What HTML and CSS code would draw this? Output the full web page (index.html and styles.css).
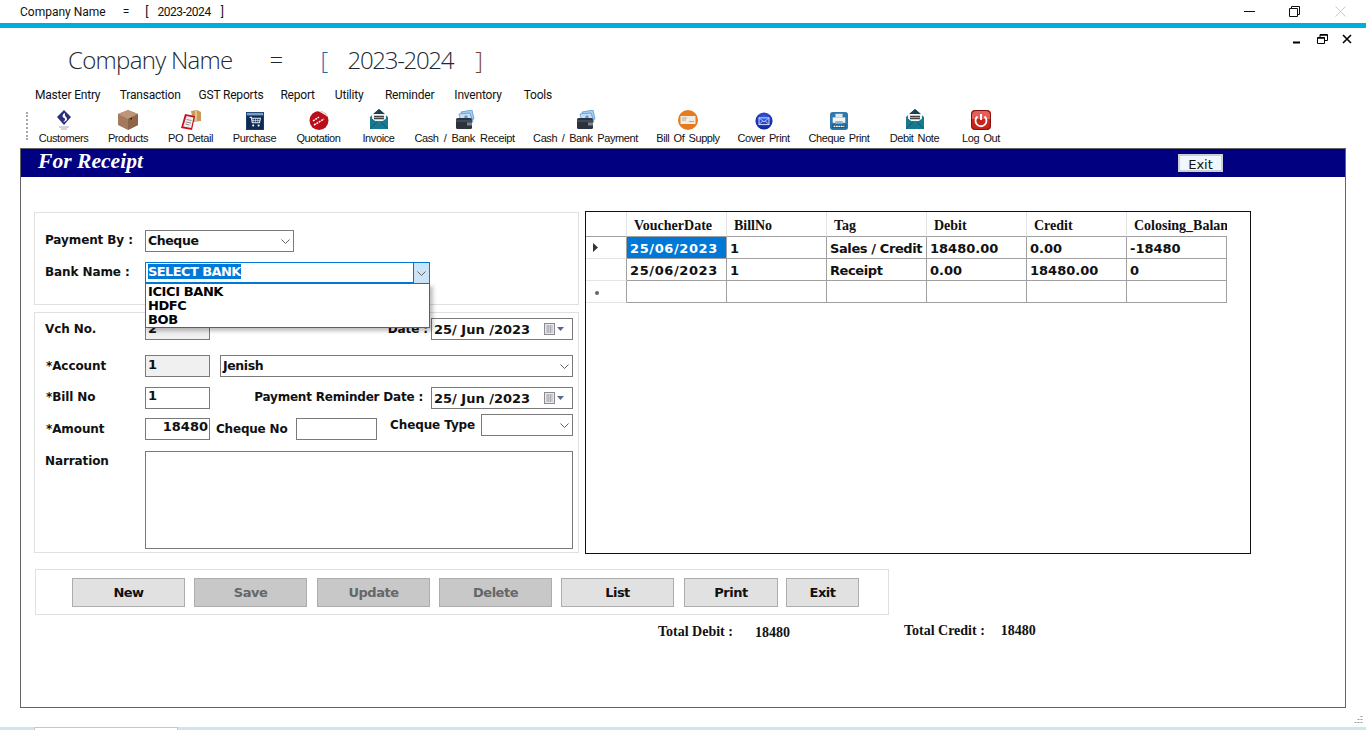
FILE: index.html
```html
<!DOCTYPE html>
<html lang="en">
<head>
<meta charset="utf-8">
<title>For Receipt</title>
<link rel="stylesheet" href="styles.css">
</head>
<body>
<svg class="defs" width="0" height="0" aria-hidden="true">
  <symbol id="chev" viewBox="0 0 9 5"><path d="M.5.5 4.500 4.500 8.500.5" fill="none" stroke="#606060"/></symbol>
  <symbol id="cal" viewBox="0 0 24 12">
    <rect x=".5" y=".5" width="10" height="11" fill="#e8e8ee" stroke="#8a8a90"/>
    <path d="M2 3h7M2 5h7M2 7h7M2 9h7M4 2v8M6.500 2v8" stroke="#9a9aa0" stroke-width=".7"/>
    <path d="M13 4h7l-3.500 4z" fill="#55688a"/>
  </symbol>
  <symbol id="mail" viewBox="0 0 20 22">
    <path d="M1 9 10 1l9 8v12H1z" fill="#1c7f96"/>
    <path d="M3 7 10 1l7 6-3 1H6z" fill="#1e3f50"/>
    <rect x="3" y="6" width="14" height="7" fill="#f4f6f6"/>
    <path d="M5 8.500h10M5 10.500h10" stroke="#444" stroke-width="1.300"/>
    <path d="M1 9l9 7 9-7v12H1z" fill="#17798f"/>
    <path d="M1 21l7-7M19 21l-7-7" stroke="#0d5568" stroke-width=".8"/>
  </symbol>
  <symbol id="wallet" viewBox="0 0 20 20">
    <path d="M6 2 17 0l2 9-11 3z" fill="#a9cdf0" stroke="#4b8ccc" stroke-width=".7"/>
    <path d="M4 4 15 3l3 9H6z" fill="#c6e0f8" stroke="#4b8ccc" stroke-width=".7"/>
    <circle cx="11" cy="7" r="1.800" fill="#5f9bd8"/>
    <rect x="1" y="8" width="16" height="11" rx="1.500" fill="#2c333c"/>
    <path d="M1 11h16" stroke="#59626e"/>
    <rect x="12" y="12.500" width="5" height="3" fill="#7b8590"/>
  </symbol>
</svg>

<header class="titlebar">
  <span class="titlebar-name">Company Name</span>
  <span class="titlebar-eq">=</span>
  <span class="titlebar-br">[</span>
  <span class="titlebar-yr">2023-2024</span>
  <span class="titlebar-br2">]</span>
  <div class="winctl">
    <svg class="wc" viewBox="0 0 11 11"><path d="M0 5.500h11" stroke="#111"/></svg>
    <svg class="wc wc-res" viewBox="0 0 11 11"><path d="M.5 2.500h8v8h-8zM2.500 2.500v-2h8v8h-2" fill="none" stroke="#111"/></svg>
    <svg class="wc wc-close" viewBox="0 0 11 11"><path d="M.5.5l10 10M10.500.5l-10 10" stroke="#c8c8c8"/></svg>
  </div>
</header>
<div class="accent"></div>

<div class="mdictl">
  <svg class="mdi mdi-min" viewBox="0 0 9 10"><path d="M1 8.500h7" stroke="#000" stroke-width="2"/></svg>
  <svg class="mdi mdi-res" viewBox="0 0 11 10"><path d="M.5 3.500h7v6h-7zM3 3V.5h7.500v6H8" fill="none" stroke="#000"/><path d="M.5 4h7M3 1h7" stroke="#000" stroke-width="1.500"/></svg>
  <svg class="mdi mdi-close" viewBox="0 0 10 10"><path d="M1 1l8 8M9 1l-8 8" stroke="#000" stroke-width="1.600"/></svg>
</div>

<div class="company">
  <span class="co-name">Company Name</span>
  <span class="co-eq">=</span>
  <span class="co-open">[</span>
  <span class="co-year">2023-2024</span>
  <span class="co-close">]</span>
</div>

<nav class="menu">
  <span class="m1">Master Entry</span>
  <span class="m2">Transaction</span>
  <span class="m3">GST Reports</span>
  <span class="m4">Report</span>
  <span class="m5">Utility</span>
  <span class="m6">Reminder</span>
  <span class="m7">Inventory</span>
  <span class="m8">Tools</span>
</nav>

<div class="toolbar">
  <div class="grip"></div>
  <div class="tool t-cust">
    <svg class="ico" viewBox="0 0 20 20"><path d="M10 0 17 7l-7 8-7-8z" fill="#2c2f78"/><path d="M11 3c-3 1-3 4-1 5 2 .5 1 3-1 4 4-.5 5-3 3-5-1.500-1-1-3-1-4z" fill="#fff"/><path d="M5 17h10M7 19h6" stroke="#a8a8b4"/></svg>
    <span>Customers</span>
  </div>
  <div class="tool t-prod">
    <svg class="ico" viewBox="0 0 20 20"><path d="M10 0 20 4v11l-10 5L0 15V4z" fill="#a47a5e"/><path d="M0 4l10 5 10-5-10-4z" fill="#bd9679"/><path d="M10 9v11l10-5V4z" fill="#8f654a"/><path d="M11 9l3-1.500v2z" fill="#222"/></svg>
    <span>Products</span>
  </div>
  <div class="tool t-po">
    <svg class="ico" viewBox="0 0 20 20"><path d="M10 1l6-1 4 2v9l-8 1z" fill="#c89a58"/><path d="M15 .5v11" stroke="#e6c48e" stroke-width="2"/><path d="M4 4l10 2-3 14-11-2z" fill="#c8101c"/><path d="M5.500 6l7 1.500-2.300 10.500-8-1.500z" fill="#eee"/><path d="M5.500 9.500l5 1M5 12l5 1M4.500 14l4 1" stroke="#777" stroke-width=".8"/></svg>
    <span>PO Detail</span>
  </div>
  <div class="tool t-pur">
    <svg class="ico ico-sm" viewBox="0 0 20 20"><rect width="20" height="20" fill="#1c3f6e"/><rect x="1" y="1" width="18" height="3" fill="#7d9cc0"/><rect x="1" y="4" width="18" height="15" fill="#0d2a55"/><path d="M4 6h2l1 6h8l1-5H6" fill="none" stroke="#e8f0fa" stroke-width="1.200"/><path d="M8 7.500v4M10.500 7.500v4M13 7.500v4M6.500 9.500h9" stroke="#e8f0fa" stroke-width=".7"/><circle cx="8" cy="15" r="1.200" fill="#fff"/><circle cx="14" cy="15" r="1.200" fill="#fff"/></svg>
    <span>Purchase</span>
  </div>
  <div class="tool t-quo">
    <svg class="ico" viewBox="0 0 20 20"><circle cx="10" cy="10.500" r="9.500" fill="#b80f1a"/><path d="M9 1.200C13 .5 17 3 19 7.500 16 4.500 13 3 9 1.200z" fill="#eee4e4"/><path d="M4 11l6-4M5 15l10-6" stroke="#fff" stroke-width="1.500" stroke-dasharray="2 .8"/></svg>
    <span>Quotation</span>
  </div>
  <div class="tool t-inv">
    <svg class="ico ico-mail"><use href="#mail"/></svg>
    <span>Invoice</span>
  </div>
  <div class="tool t-rec">
    <svg class="ico"><use href="#wallet"/></svg>
    <span>Cash / Bank Receipt</span>
  </div>
  <div class="tool t-pay">
    <svg class="ico"><use href="#wallet"/></svg>
    <span>Cash / Bank Payment</span>
  </div>
  <div class="tool t-bill">
    <svg class="ico" viewBox="0 0 20 20"><circle cx="10" cy="10" r="10" fill="#e57a1e"/><rect x="2.500" y="6" width="15" height="8" fill="#f1ece2"/><path d="M4 8h5M4 10h4M11 11.500h5" stroke="#9a9a90" stroke-width=".8"/></svg>
    <span>Bill Of Supply</span>
  </div>
  <div class="tool t-cov">
    <svg class="ico ico-sm" viewBox="0 0 20 20"><defs><radialGradient id="bl" cx=".5" cy=".35" r=".7"><stop offset="0" stop-color="#3d62f0"/><stop offset="1" stop-color="#0a1c8c"/></radialGradient></defs><circle cx="10" cy="10" r="9.500" fill="url(#bl)"/><rect x="4.500" y="6.500" width="11" height="7.500" fill="none" stroke="#dde6ff"/><path d="M4.500 6.500 10 11l5.500-4.500M4.500 14l4-4M15.500 14l-4-4" fill="none" stroke="#dde6ff" stroke-width=".8"/></svg>
    <span>Cover Print</span>
  </div>
  <div class="tool t-chq">
    <svg class="ico ico-sm" viewBox="0 0 20 20"><rect width="20" height="20" rx="3" fill="#2e78ac"/><path d="M6 2h8v4H6z" fill="#dfe8ee"/><path d="M3 6h14v6H3z" fill="#f2f5f7"/><rect x="6" y="10" width="8" height="3" fill="#9fb4c2"/><rect x="2" y="14" width="16" height="4" fill="#1c5a88"/><path d="M4 16h12" stroke="#fff" stroke-width="1.600" stroke-dasharray="2 .7"/></svg>
    <span>Cheque Print</span>
  </div>
  <div class="tool t-deb">
    <svg class="ico ico-mail"><use href="#mail"/></svg>
    <span>Debit Note</span>
  </div>
  <div class="tool t-out">
    <svg class="ico" viewBox="0 0 20 20"><rect width="20" height="20" rx="4" fill="#c9241c"/><path d="M1 4q0-3 3-3h12q3 0 3 3v5H1z" fill="#e26058"/><rect x=".5" y=".5" width="19" height="19" rx="4" fill="none" stroke="#7c1410"/><path d="M6.500 6.500a5.500 5.500 0 1 0 7 0" fill="none" stroke="#fff" stroke-width="1.800"/><path d="M10 4v6" stroke="#fff" stroke-width="2"/></svg>
    <span>Log Out</span>
  </div>
</div>

<main class="form">
  <div class="form-head">
    <h1 class="form-title">For Receipt</h1>
    <div class="head-exit">Exit</div>
  </div>

  <div class="upper">
    <div class="left-col">
      <section class="panel panel-bank">
        <div class="row row-pay">
          <label class="lbl lbl-w">Payment By :</label>
          <div class="ctl combo combo-pay">Cheque<svg class="chev"><use href="#chev"/></svg></div>
        </div>
        <div class="row row-bank">
          <label class="lbl lbl-w">Bank Name :</label>
          <div class="bank">
            <span class="bank-sel">SELECT BANK</span>
            <span class="bank-btn"><svg class="chev"><use href="#chev"/></svg></span>
            <ul class="bank-list">
              <li>ICICI BANK</li>
              <li>HDFC</li>
              <li>BOB</li>
            </ul>
          </div>
        </div>
      </section>

      <section class="panel panel-vch">
        <div class="row r1">
          <label class="lbl lbl-w">Vch No.</label>
          <div class="ctl num ro">2</div>
          <label class="lbl push">Date :</label>
          <div class="ctl date">25/ Jun /2023<svg class="cal"><use href="#cal"/></svg></div>
        </div>
        <div class="row r2">
          <label class="lbl lbl-w star">*Account</label>
          <div class="ctl num ro">1</div>
          <div class="ctl combo combo-acc">Jenish<svg class="chev"><use href="#chev"/></svg></div>
        </div>
        <div class="row r3">
          <label class="lbl lbl-w star">*Bill No</label>
          <div class="ctl num">1</div>
          <label class="lbl push">Payment Reminder Date :</label>
          <div class="ctl date">25/ Jun /2023<svg class="cal"><use href="#cal"/></svg></div>
        </div>
        <div class="row r4">
          <label class="lbl lbl-w star">*Amount</label>
          <div class="ctl num right">18480</div>
          <label class="lbl chq-lbl">Cheque No</label>
          <div class="ctl chq-no"></div>
          <label class="lbl type-lbl">Cheque Type</label>
          <div class="ctl combo combo-type"><svg class="chev"><use href="#chev"/></svg></div>
        </div>
        <div class="row r5">
          <label class="lbl lbl-w">Narration</label>
          <div class="ctl narr"></div>
        </div>
      </section>
    </div>

    <section class="gridbox">
      <table class="grid">
        <colgroup><col class="c0"><col class="c1"><col class="c1"><col class="c1"><col class="c1"><col class="c1"><col class="c1"></colgroup>
        <thead>
          <tr><th></th><th>VoucherDate</th><th>BillNo</th><th>Tag</th><th>Debit</th><th>Credit</th><th><span class="clip">Colosing_Balance</span></th></tr>
        </thead>
        <tbody>
          <tr><td class="rh"><svg class="arrow" viewBox="0 0 5 9"><path d="M0 0l5 4.500L0 9z" fill="#333"/></svg></td><td class="sel dt">25/06/2023</td><td>1</td><td class="txt">Sales / Credit</td><td>18480.00</td><td>0.00</td><td>-18480</td></tr>
          <tr><td class="rh"></td><td class="dt">25/06/2023</td><td>1</td><td class="txt">Receipt</td><td>0.00</td><td>18480.00</td><td>0</td></tr>
          <tr><td class="rh"><span class="newdot"></span></td><td></td><td></td><td></td><td></td><td></td><td></td></tr>
        </tbody>
      </table>
    </section>
  </div>

  <section class="actions">
    <button class="btn b-new">New</button>
    <button class="btn b-save off">Save</button>
    <button class="btn b-upd off">Update</button>
    <button class="btn b-del off">Delete</button>
    <button class="btn b-list">List</button>
    <button class="btn b-print">Print</button>
    <button class="btn b-exit">Exit</button>
  </section>

  <div class="totals">
    <span class="t-lbl">Total Debit :</span>
    <span class="t-val v-deb">18480</span>
    <span class="t-lbl l-cred">Total Credit :</span>
    <span class="t-val v-cred">18480</span>
  </div>
</main>

<svg class="resize" viewBox="0 0 12 12" aria-hidden="true"><path d="M9.500 2v1M6.500 5v1M9.500 5v1M3.500 8v1M6.500 8v1M9.500 8v1" stroke="#9a9a9a" stroke-width="2"/></svg>
<footer class="status"><div class="status-tab"></div></footer>
</body>
</html>
```

FILE: styles.css
```css
* { box-sizing: border-box; }
html, body { margin: 0; padding: 0; }
body {
  position: relative;
  width: 1366px;
  height: 730px;
  overflow: hidden;
  background: #fff;
  color: #000;
  font-family: "Liberation Sans", Arial, sans-serif;
}
.defs { position: absolute; }

/* window title bar */
.titlebar {
  display: flex;
  align-items: center;
  height: 23px;
  padding-left: 20px;
  font: 12px Roboto, "Liberation Sans", sans-serif;
  color: #111;
}
.titlebar-eq { margin-left: 17px; }
.titlebar-br { margin-left: 16px; }
.titlebar-yr { margin-left: 9px; letter-spacing: -.45px; }
.titlebar-br2 { margin-left: 10px; }
.winctl { display: flex; margin-left: auto; padding-right: 20px; }
.wc { width: 11px; height: 11px; }
.wc-res { margin-left: 34px; }
.wc-close { margin-left: 35px; }
.accent { height: 5px; background: #00aedb; }

/* MDI buttons */
.mdictl {
  display: flex;
  justify-content: flex-end;
  height: 18px;
  padding: 6px 14px 0 0;
}
.mdi { height: 10px; }
.mdi-min { width: 9px; }
.mdi-res { width: 11px; margin-left: 16px; }
.mdi-close { width: 10px; margin-left: 14px; }

/* company heading */
.company {
  display: flex;
  align-items: center;
  height: 30px;
  padding: 0 0 4px 68px;
  font: 300 24px "Open Sans", "Liberation Sans", sans-serif;
  letter-spacing: -.7px;
  color: #1b2733;
}
.co-eq { margin-left: 37px; }
.co-open { margin-left: 38px; color: #1f6aa5; }
.co-year { margin-left: 20px; letter-spacing: -1.3px; }
.co-close { margin-left: 22px; color: #7a4520; }

/* menu */
.menu {
  display: flex;
  align-items: center;
  height: 20px;
  margin-top: 9px;
  padding-left: 35px;
  font: 12px Roboto, "Liberation Sans", sans-serif;
  letter-spacing: -.2px;
  color: #111;
}
.m2 { margin-left: 19.4px; }
.m3 { margin-left: 18px; }
.m4 { margin-left: 17px; }
.m5 { margin-left: 20px; }
.m6 { margin-left: 21.4px; }
.m7 { margin-left: 20px; }
.m8 { margin-left: 22px; }

/* toolbar */
.toolbar {
  display: flex;
  align-items: flex-end;
  height: 39px;
  margin-top: 3px;
  padding-left: 26px;
  padding-bottom: 2px;
  font-size: 11px;
  letter-spacing: -.4px;
  word-spacing: 1.5px;
  color: #111;
}
.grip {
  align-self: flex-start;
  width: 2px;
  height: 28px;
  margin: 4px 11px 0 0;
  border-left: 2px dotted #a8a8a8;
}
.tool {
  display: flex;
  flex-direction: column;
  align-items: center;
  white-space: nowrap;
  line-height: 13px;
}
.ico { display: block; width: 20px; height: 20px; margin-bottom: 2px; }
.ico-sm { width: 18px; height: 18px; }
.ico-mail { width: 20px; height: 22px; margin-top: -2px; }
.t-cust { width: 49px; }
.t-prod { width: 42px; margin-left: 19px; }
.t-po { width: 45px; margin-left: 19px; }
.t-pur { width: 45px; margin-left: 19px; }
.t-quo { width: 47px; margin-left: 18px; }
.t-inv { width: 35px; margin-left: 19px; }
.t-rec { width: 101px; margin-left: 18px; word-spacing: 2.5px; }
.t-pay { width: 105px; margin-left: 18px; word-spacing: 2px; }
.t-bill { width: 62px; margin-left: 19px; }
.t-cov { width: 53px; margin-left: 18px; }
.t-chq { width: 62px; margin-left: 18px; }
.t-deb { width: 51px; margin-left: 19px; }
.t-out { width: 38px; margin-left: 22px; }

/* form window */
.form {
  width: 1326px;
  height: 560px;
  margin: 1px 0 0 20px;
  border: 1px solid #646464;
}
.form-head {
  display: flex;
  align-items: center;
  height: 28px;
  padding: 0 122px 0 17px;
  background: #000080;
}
.form-title {
  margin: 0;
  font: italic bold 21.6px "Liberation Serif", serif;
  color: #fff;
  position: relative;
  top: -2px;
}
.head-exit {
  margin-left: auto;
  width: 45px;
  height: 18px;
  padding-top: 2px;
  border: 2px solid #cfcfcf;
  background: #f0f8ff;
  text-align: center;
  font: 13px/14px "DejaVu Sans", sans-serif;
  color: #111;
  overflow: hidden;
}
.upper {
  display: flex;
  align-items: flex-start;
  gap: 6px;
  padding: 35px 0 0 13px;
}
.left-col { display: flex; flex-direction: column; gap: 7px; width: 545px; }
.panel { border: 1px solid #e0e0e0; }
.panel-bank { height: 93px; padding: 17px 0 0 10px; }
.panel-vch { height: 241px; padding: 5px 5px 0 10px; }
.row { display: flex; align-items: center; }
.lbl {
  font: bold 12px "DejaVu Sans", sans-serif;
  letter-spacing: -.1px;
  color: #111;
  white-space: nowrap;
}
.panel-bank .lbl, .r3 .lbl { margin-bottom: 2px; }
.lbl-w { width: 100px; flex: none; }
.star { padding-left: 1px; }
.push { margin-left: auto; margin-right: 3px; }
.r3 .push { margin-right: 8px; letter-spacing: -.2px; }

.ctl {
  position: relative;
  display: flex;
  align-items: center;
  height: 22px;
  padding-left: 2px;
  border: 1px solid #7a7a7a;
  background: #fff;
  font: bold 13px "DejaVu Sans", sans-serif;
  color: #111;
  white-space: nowrap;
}
.combo {
  padding-bottom: 2px;
  font-size: 12.5px;
  letter-spacing: -.4px;
}
.chev { position: absolute; right: 3px; top: 8px; width: 9px; height: 5px; }
.combo-pay { width: 149px; }
.row-pay { height: 22px; }
.row-bank { height: 21px; margin-top: 10px; }

.bank {
  position: relative;
  display: flex;
  align-items: center;
  width: 285px;
  height: 22px;
  padding: 0 0 2px 2px;
  border: 1px solid #0078d7;
  border-bottom-width: 2px;
  font: bold 13px "DejaVu Sans", sans-serif;
}
.bank-sel { background: #0078d7; color: #fff; line-height: 15px; letter-spacing: -.6px; }
.bank-btn {
  position: absolute;
  top: 0;
  right: 0;
  width: 16px;
  height: 20px;
  border-left: 1px solid #0078d7;
  background: #cce4f7;
}
.bank-list {
  position: absolute;
  z-index: 5;
  top: 20px;
  left: -1px;
  width: 285px;
  height: 45px;
  margin: 0;
  padding: 1px 0 0 2px;
  list-style: none;
  border: 1px solid #0078d7;
  background: #fff;
  box-shadow: 3px 3px 4px rgba(0, 0, 0, .25);
  line-height: 14px;
  letter-spacing: -.4px;
}

.r1, .r2, .r3 { height: 22px; }
.r2 { margin-top: 15px; }
.r3 { margin-top: 10px; }
.r4 { height: 22px; margin-top: 9px; }
.r5 { align-items: flex-start; margin-top: 11px; }
.num { width: 65px; flex: none; align-items: flex-start; }
.r1 .num { padding-top: 2px; }
.r2 .num { padding-top: 1px; }
.ro { background: #f0f0f0; }
.right { justify-content: flex-end; padding-right: 1px; }
.date { width: 142px; flex: none; }
.cal { position: absolute; right: 4px; top: 4px; width: 24px; height: 12px; }
.combo-acc { flex: 1; margin-left: 10px; }
.chq-lbl { margin-left: 6px; width: 80px; letter-spacing: -.2px; }
.chq-no { width: 81px; flex: none; }
.type-lbl { margin-left: 13px; align-self: flex-start; }
.combo-type { width: 92px; margin-left: auto; align-self: flex-start; position: relative; top: -4px; }
.narr { flex: 1; height: 98px; }
.r5 .lbl { padding-top: 3px; }

/* data grid */
.gridbox {
  width: 666px;
  height: 343px;
  margin-top: -1px;
  border: 1px solid #111;
  background: #fff;
}
.grid {
  table-layout: fixed;
  width: 641px;
  border-collapse: separate;
  border-spacing: 0;
}
.c0 { width: 41px; }
.c1 { width: 100px; }
.grid th, .grid td { padding: 0 0 0 3px; overflow: hidden; white-space: nowrap; text-align: left; }
.grid th {
  height: 25px;
  padding: 4px 0 0 7px;
  border-right: 1px solid #e4e4e4;
  border-bottom: 1px solid #a0a0a0;
  font: bold 14px "Liberation Serif", serif;
  color: #111;
}
.grid th:last-child { border-right: 0; }
.clip { display: block; overflow: hidden; }
.grid td {
  height: 22px;
  padding-top: 2px;
  border-right: 1px solid #a0a0a0;
  border-bottom: 1px solid #a0a0a0;
  font: bold 13px "DejaVu Sans", sans-serif;
  color: #111;
}
.grid td.txt { letter-spacing: -.4px; }
.grid td.dt { letter-spacing: .6px; }
.grid td.rh { padding: 0; border-bottom-color: #e4e4e4; }
.grid td.sel { background: #0078d7; color: #fff; }
.arrow { display: block; width: 5px; height: 9px; margin-left: 7px; }
.newdot { display: block; width: 4px; height: 4px; margin: 3px 0 0 9px; border-radius: 50%; background: #666; }

/* action bar */
.actions {
  display: flex;
  width: 854px;
  height: 46px;
  margin: 15px 0 0 14px;
  padding: 8px 0 0 36px;
  border: 1px solid #e0e0e0;
}
.btn {
  height: 29px;
  margin: 0;
  padding: 0;
  border: 1px solid #adadad;
  background: #e1e1e1;
  font: bold 13px "DejaVu Sans", sans-serif;
  letter-spacing: -.5px;
  color: #111;
}
.off { background: #c8c8c8; color: #666; }
.b-new, .b-save, .b-upd, .b-del, .b-list { width: 113px; }
.b-save { margin-left: 9px; }
.b-upd { margin-left: 10px; }
.b-del { margin-left: 9px; }
.b-list { margin-left: 9px; }
.b-print { width: 94px; margin-left: 10px; }
.b-exit { width: 73px; margin-left: 8px; }

/* totals */
.totals {
  display: flex;
  align-items: flex-start;
  height: 20px;
  margin-top: 9px;
  padding-left: 637px;
  font: bold 14px "Liberation Serif", serif;
  color: #111;
}
.v-deb { margin: 1px 0 0 22px; }
.l-cred { margin: -1px 0 0 114px; }
.v-cred { margin: -1px 0 0 16px; }

/* bottom strip */
.resize { position: absolute; right: 2px; top: 714px; width: 12px; height: 12px; }
.status {
  position: absolute;
  left: 0;
  right: 0;
  top: 727px;
  height: 3px;
  background: #cfe5f0;
}
.status-tab {
  width: 144px;
  height: 3px;
  margin-left: 34px;
  background: #fff;
  border: 1px solid #c8c8c8;
  border-bottom: 0;
}
```
